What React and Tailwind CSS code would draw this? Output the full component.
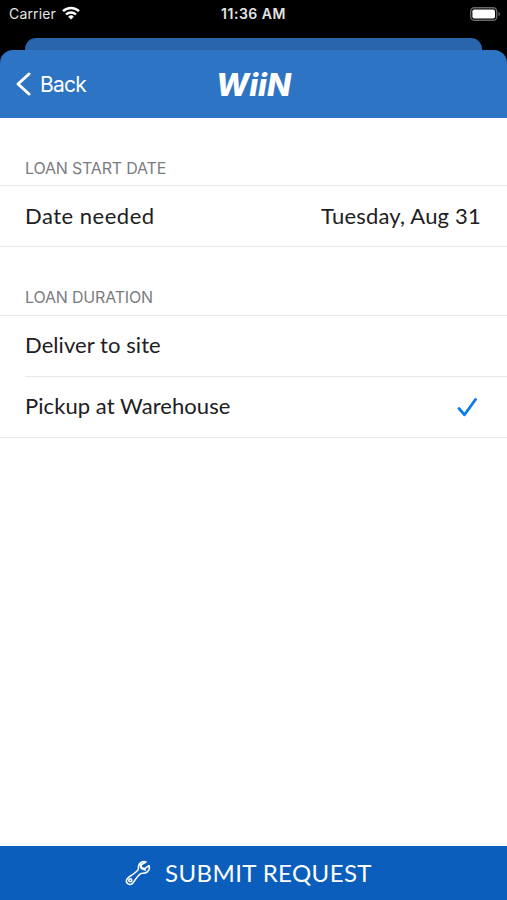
import React, { useState } from 'react'

const options = ['Deliver to site', 'Pickup at Warehouse']

function StatusBar() {
  return (
    <div className="grid h-7 grid-cols-3 items-center bg-black pl-[9px] pr-[9px] font-['Inter',sans-serif] text-sm text-[#e4e4e4]">
      <div className="flex items-center gap-[6px]">
        <span className="tracking-[0.15px]">Carrier</span>
        <svg className="-mt-[2px]" width="18" height="14" viewBox="0 0 18 14" fill="none" stroke="#fff" strokeWidth="2.4">
          <path d="M1 5.2a11.6 11.6 0 0 1 16 0" />
          <path d="M4 8.5a7.3 7.3 0 0 1 10 0" />
          <path d="M9 13.6 6.2 10.7a4 4 0 0 1 5.6 0Z" fill="#fff" stroke="none" />
        </svg>
      </div>
      <span className="whitespace-nowrap text-center font-semibold tracking-[0.5px]">11:36 AM</span>
      <div className="-mr-[3px] -mt-[1px] flex items-center justify-end">
        <svg width="31" height="14" viewBox="0 0 31 14">
          <rect x="0.7" y="0.7" width="26" height="12.6" rx="3.6" fill="none" stroke="#68686b" strokeWidth="1.4" />
          <rect x="2.4" y="2.4" width="22.6" height="9.2" rx="1.8" fill="#fff" />
          <path d="M28.500 5v4c2-.7 2-3.300 0-4Z" fill="#68686b" />
        </svg>
      </div>
    </div>
  )
}

function Header() {
  return (
    <div className="bg-black pt-[10px]">
      <div className="mx-[25px] h-3 rounded-t-[11px] bg-[#2965ad]" />
      <header className="grid h-[68px] grid-cols-3 items-center rounded-t-[13px] bg-[#2e74c5] px-4 text-white">
        <button className="flex items-center gap-[9px]">
          <svg width="15" height="24" viewBox="0 0 15 24" fill="none" stroke="#fff" strokeWidth="3" strokeLinecap="round" strokeLinejoin="round">
            <path d="M13 2 2 12l11 10" />
          </svg>
          <span className="mt-[1px] font-['Inter',sans-serif] text-[21px] leading-6 tracking-[-0.75px]">Back</span>
        </button>
        <svg className="mx-auto" width="90" height="46" viewBox="0 0 90 46">
          <text x="8" y="35" fill="#fff" fontFamily="Inter, sans-serif" fontSize="31" fontWeight="800" fontStyle="italic" textLength="75" lengthAdjust="spacingAndGlyphs">
            WiiN
          </text>
        </svg>
      </header>
    </div>
  )
}

function SectionTitle({ children }) {
  return (
    <h2 className="pl-[25px] font-['Inter',sans-serif] text-base leading-5 tracking-[-0.18px] text-[#7c7c7f]">
      {children}
    </h2>
  )
}

export default function App() {
  const [selected, setSelected] = useState('Pickup at Warehouse')

  return (
    <div className="flex h-[900px] w-[507px] flex-col overflow-hidden bg-white font-['Lato',sans-serif]">
      <StatusBar />
      <Header />

      <main className="flex-1">
        {/* Start date */}
        <section className="pt-10">
          <SectionTitle>LOAN START DATE</SectionTitle>
          <div className="mt-[7px] flex h-[62px] items-center justify-between border-y border-[#e8e8e9] pb-[2px] pl-[25px] pr-[26px] text-[22px] text-[#202022]">
            <span className="tracking-[0.5px]">Date needed</span>
            <span className="tracking-[0.2px]">Tuesday, Aug 31</span>
          </div>
        </section>

        {/* Delivery options */}
        <section className="pt-10">
          <SectionTitle>LOAN DURATION</SectionTitle>
          <div className="mt-[8px] border-y border-[#e8e8e9] pl-[25px] text-[22px] text-[#202022]">
            {options.map((option) => (
              <button
                key={option}
                onClick={() => setSelected(option)}
                className="flex h-[60px] w-full items-center justify-between pr-[30px] not-last:h-[61px] not-last:border-b not-last:border-[#e8e8e9]"
              >
                <span className="pb-[3px] tracking-[0.07px]">{option}</span>
                {selected === option && (
                  <svg width="20" height="20" viewBox="0 0 20 20" fill="none" stroke="#0a7aef" strokeWidth="2.8" strokeLinecap="round" strokeLinejoin="round">
                    <path d="m2 11.500 5.500 6.300L18.500 2.500" />
                  </svg>
                )}
              </button>
            ))}
          </div>
        </section>
      </main>

      <button className="flex h-[54px] items-center justify-center gap-[14px] bg-[#0b5ebc] pr-[10px] text-[24px] text-white">
        <svg width="26" height="26" viewBox="0 0 26 26" fill="none" stroke="#fff" strokeWidth="1.600" strokeLinejoin="round" strokeLinecap="round">
          <path d="M21 2c-3-1.300-6.800.5-7.400 3.700-.4 1.900.2 3-.6 4.200-1.600 2.300-5.500 4.800-9.400 7.400-2.500 1.800-2.900 4.300-1.300 6 1.700 1.800 4.600 1.500 6.100-.9 2.400-3.700 4.900-7.200 7.300-8.800 1.200-.8 2.500 0 4.300-.5 3.500-.9 5.200-4.300 4-7.500l-4.300 3-3.200-.8-.4-3.100Z" />
          <path d="m14.800 4.500 1.600 4 4 1.500" />
          <circle cx="5.300" cy="20.300" r="1.500" />
        </svg>
        <span className="pb-[1px] tracking-[0.4px]">SUBMIT REQUEST</span>
      </button>
    </div>
  )
}
